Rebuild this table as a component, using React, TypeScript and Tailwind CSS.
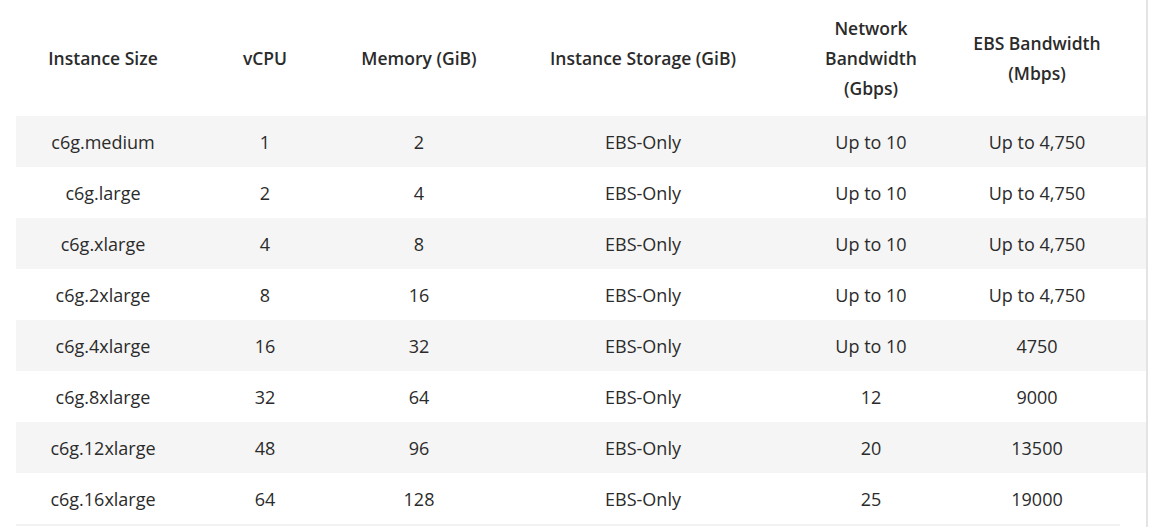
import React from 'react';

const headers = [
  ['Instance Size'],
  ['vCPU'],
  ['Memory (GiB)'],
  ['Instance Storage (GiB)'],
  ['Network', 'Bandwidth', '(Gbps)'],
  ['EBS Bandwidth', '(Mbps)'],
];

const rows = [
  ['c6g.medium', '1', '2', 'EBS-Only', 'Up to 10', 'Up to 4,750'],
  ['c6g.large', '2', '4', 'EBS-Only', 'Up to 10', 'Up to 4,750'],
  ['c6g.xlarge', '4', '8', 'EBS-Only', 'Up to 10', 'Up to 4,750'],
  ['c6g.2xlarge', '8', '16', 'EBS-Only', 'Up to 10', 'Up to 4,750'],
  ['c6g.4xlarge', '16', '32', 'EBS-Only', 'Up to 10', '4750'],
  ['c6g.8xlarge', '32', '64', 'EBS-Only', '12', '9000'],
  ['c6g.12xlarge', '48', '96', 'EBS-Only', '20', '13500'],
  ['c6g.16xlarge', '64', '128', 'EBS-Only', '25', '19000'],
];

const cols = 'grid grid-cols-[174px_150px_158px_290px_166px_166px]';

export default function App() {
  return (
    <div className="h-[527px] overflow-hidden bg-white font-['Open_Sans',sans-serif] text-[#2b2b2b]">
      <div className="w-[1148px] h-full border-r-2 border-[#e4e4e4] pl-4">
        {/* header */}
        <div className={`${cols} h-[116px] items-center text-center text-[17.5px] font-semibold leading-[30px]`}>
          {headers.map((h, i) => (
            <div key={i}>
              {h.map((line) => (
                <div key={line}>{line}</div>
              ))}
            </div>
          ))}
        </div>

        {rows.map((r, i) => (
          <div
            key={r[0]}
            className={`${cols} h-[51px] items-center pt-[2px] text-center text-[18px] ${i % 2 === 0 ? 'bg-[#f5f5f5]' : 'bg-white'}`}
          >
            {r.map((c, j) => (
              <div key={j}>{c}</div>
            ))}
          </div>
        ))}

        {/* top edge of the next striped row */}
        <div className="w-[1104px] h-[2px] bg-[#f2f2f2]" />
      </div>
    </div>
  );
}
